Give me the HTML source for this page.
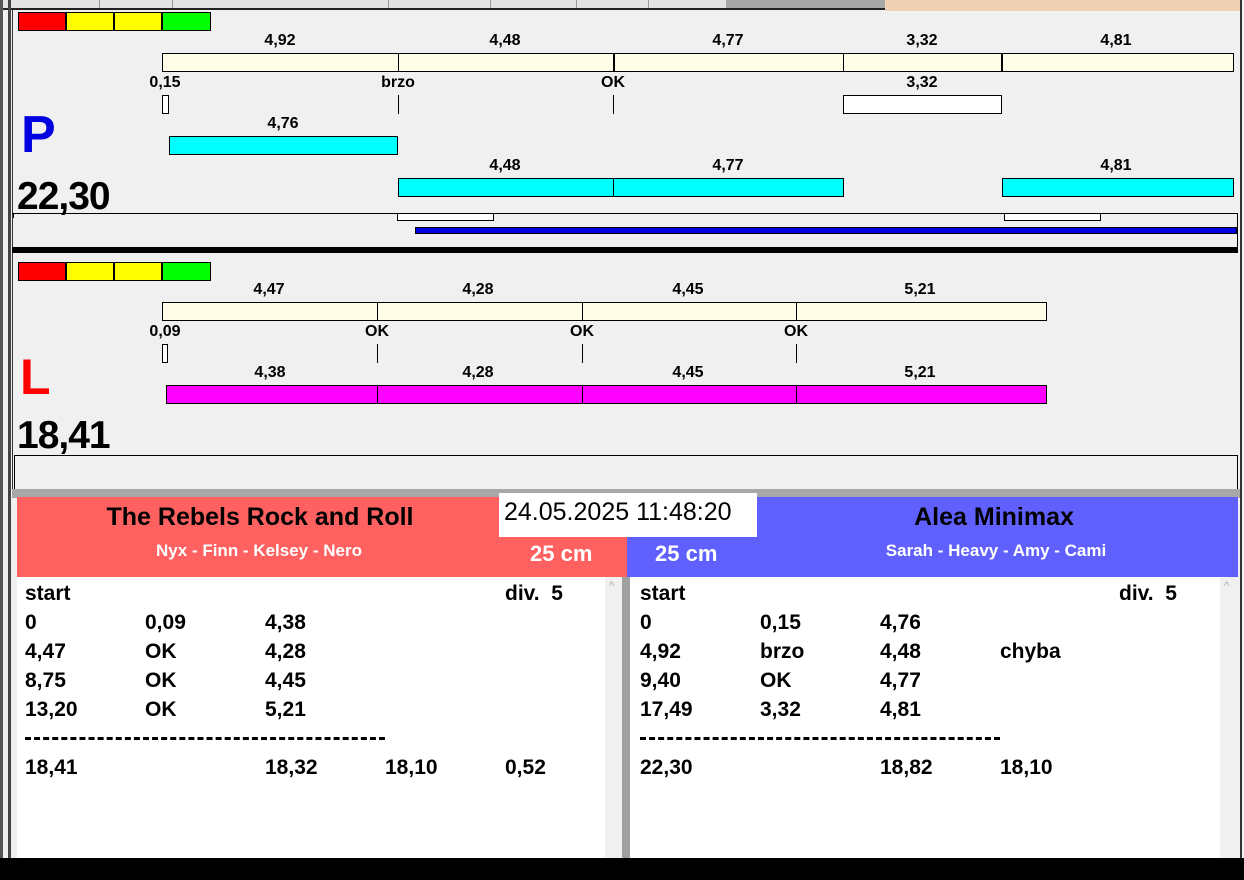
<!DOCTYPE html>
<html><head><meta charset="utf-8"><style>
*{margin:0;padding:0;box-sizing:border-box}
body{width:1244px;height:880px;background:#fff;position:relative;overflow:hidden;font-family:"Liberation Sans",Arial,sans-serif}
div{position:absolute}
.t{font-weight:bold;font-size:16px;color:#000;transform:translateX(-50%);white-space:nowrap;line-height:16px;margin-top:1px}
.bar{border:1px solid #000}
.v{width:1px;background:#000}
.r{font-weight:bold;font-size:21px;line-height:24px;white-space:nowrap;margin-top:1px}
</style></head><body>
<div style="left:0;top:0;width:1244px;height:880px;background:#f0f0f0"></div>
<!-- top tabs -->
<div style="left:0;top:0;width:885px;height:10px;background:#e4e4e4;border-bottom:2px solid #222"></div>
<div style="left:99px;top:0;width:1px;height:8px;background:#999"></div>
<div style="left:172px;top:0;width:1px;height:8px;background:#999"></div>
<div style="left:388px;top:0;width:1px;height:8px;background:#999"></div>
<div style="left:490px;top:0;width:1px;height:8px;background:#999"></div>
<div style="left:576px;top:0;width:1px;height:8px;background:#999"></div>
<div style="left:648px;top:0;width:1px;height:8px;background:#999"></div>
<div style="left:726px;top:0;width:159px;height:8px;background:#a8a8a8"></div>
<div style="left:885px;top:0;width:355px;height:11px;background:#f0d0b4"></div>
<!-- left border -->
<div style="left:0;top:0;width:3px;height:880px;background:#555"></div>
<div style="left:8px;top:0;width:3px;height:880px;background:#444"></div>
<div style="left:1240px;top:0;width:2px;height:880px;background:#333"></div>
<div style="left:12px;top:10px;width:1px;height:480px;background:#333"></div>

<!-- P panel -->
<div style="left:18px;top:12px;width:48px;height:19px;background:#f00;border:1px solid #000"></div>
<div style="left:66px;top:12px;width:48px;height:19px;background:#ff0;border:1px solid #000"></div>
<div style="left:114px;top:12px;width:48px;height:19px;background:#ff0;border:1px solid #000"></div>
<div style="left:162px;top:12px;width:49px;height:19px;background:#0f0;border:1px solid #000"></div>

<div class="t" style="left:280px;top:32px">4,92</div>
<div class="t" style="left:505px;top:32px">4,48</div>
<div class="t" style="left:728px;top:32px">4,77</div>
<div class="t" style="left:922px;top:32px">3,32</div>
<div class="t" style="left:1116px;top:32px">4,81</div>
<div class="bar" style="left:162px;top:53px;width:1072px;height:19px;background:#fffde8"></div>
<div class="v" style="left:398px;top:53px;height:19px"></div>
<div class="v" style="left:613px;top:53px;height:19px;width:2px"></div>
<div class="v" style="left:843px;top:53px;height:19px"></div>
<div class="v" style="left:1001px;top:53px;height:19px;width:2px"></div>
<div class="t" style="left:165px;top:74px">0,15</div>
<div class="t" style="left:398px;top:74px">brzo</div>
<div class="t" style="left:613px;top:74px">OK</div>
<div class="t" style="left:922px;top:74px">3,32</div>
<div class="bar" style="left:162px;top:95px;width:7px;height:19px;background:#fff"></div>
<div class="v" style="left:398px;top:95px;height:19px"></div>
<div class="v" style="left:613px;top:95px;height:19px"></div>
<div class="bar" style="left:843px;top:95px;width:159px;height:19px;background:#fff"></div>
<div style="left:21px;top:107px;font-size:52px;font-weight:bold;color:#0000e0;line-height:56px">P</div>
<div class="t" style="left:283px;top:115px">4,76</div>
<div class="bar" style="left:169px;top:136px;width:229px;height:19px;background:#0ff"></div>
<div class="t" style="left:505px;top:157px">4,48</div>
<div class="t" style="left:728px;top:157px">4,77</div>
<div class="t" style="left:1116px;top:157px">4,81</div>
<div class="bar" style="left:398px;top:178px;width:446px;height:19px;background:#0ff"></div>
<div class="v" style="left:613px;top:178px;height:19px"></div>
<div class="bar" style="left:1002px;top:178px;width:232px;height:19px;background:#0ff"></div>
<div style="left:17px;top:175px;font-size:39px;font-weight:bold;line-height:44px;letter-spacing:-1px">22,30</div>
<div style="left:12px;top:213px;width:1226px;height:1px;background:#000"></div>
<div class="v" style="left:13px;top:213px;height:5px"></div>
<div class="v" style="left:1237px;top:213px;height:36px"></div>
<div class="bar" style="left:397px;top:213px;width:97px;height:8px;background:#fff"></div>
<div class="bar" style="left:1004px;top:213px;width:97px;height:8px;background:#fff"></div>
<div style="left:415px;top:227px;width:822px;height:7px;background:#0000e0;border:1px solid #000"></div>
<div style="left:12px;top:247px;width:1226px;height:6px;background:#000"></div>

<!-- L panel -->
<div style="left:18px;top:262px;width:48px;height:19px;background:#f00;border:1px solid #000"></div>
<div style="left:66px;top:262px;width:48px;height:19px;background:#ff0;border:1px solid #000"></div>
<div style="left:114px;top:262px;width:48px;height:19px;background:#ff0;border:1px solid #000"></div>
<div style="left:162px;top:262px;width:49px;height:19px;background:#0f0;border:1px solid #000"></div>
<div class="t" style="left:269px;top:281px">4,47</div>
<div class="t" style="left:478px;top:281px">4,28</div>
<div class="t" style="left:688px;top:281px">4,45</div>
<div class="t" style="left:920px;top:281px">5,21</div>
<div class="bar" style="left:162px;top:302px;width:885px;height:19px;background:#fffde8"></div>
<div class="v" style="left:377px;top:302px;height:19px"></div>
<div class="v" style="left:582px;top:302px;height:19px"></div>
<div class="v" style="left:796px;top:302px;height:19px"></div>
<div class="t" style="left:165px;top:323px">0,09</div>
<div class="t" style="left:377px;top:323px">OK</div>
<div class="t" style="left:582px;top:323px">OK</div>
<div class="t" style="left:796px;top:323px">OK</div>
<div class="bar" style="left:162px;top:344px;width:6px;height:19px;background:#fff"></div>
<div class="v" style="left:377px;top:344px;height:19px"></div>
<div class="v" style="left:582px;top:344px;height:19px"></div>
<div class="v" style="left:796px;top:344px;height:19px"></div>
<div style="left:20px;top:350px;font-size:50px;font-weight:bold;color:#f00;line-height:54px">L</div>
<div class="t" style="left:270px;top:364px">4,38</div>
<div class="t" style="left:478px;top:364px">4,28</div>
<div class="t" style="left:688px;top:364px">4,45</div>
<div class="t" style="left:920px;top:364px">5,21</div>
<div class="bar" style="left:166px;top:385px;width:881px;height:19px;background:#f0f"></div>
<div class="v" style="left:377px;top:385px;height:19px"></div>
<div class="v" style="left:582px;top:385px;height:19px"></div>
<div class="v" style="left:796px;top:385px;height:19px"></div>
<div style="left:17px;top:414px;font-size:39px;font-weight:bold;line-height:44px;letter-spacing:-1px">18,41</div>
<div style="left:14px;top:455px;width:1224px;height:34px;border:1px solid #000;border-bottom:none"></div>
<div style="left:12px;top:489px;width:1228px;height:9px;background:#a8a8a8"></div>

<!-- bottom headers -->
<div style="left:17px;top:497px;width:610px;height:80px;background:#ff6060"></div>
<div style="left:627px;top:497px;width:611px;height:80px;background:#6060ff"></div>
<div style="left:499px;top:493px;width:258px;height:44px;background:#fff"></div>
<div style="left:504px;top:497px;font-size:25px;line-height:30px">24.05.2025 11:48:20</div>
<div class="t" style="left:260px;top:502px;font-size:25px;line-height:28px">The Rebels Rock and Roll</div>
<div class="t" style="left:259px;top:540px;font-size:17px;line-height:20px;color:#fff">Nyx - Finn - Kelsey - Nero</div>
<div style="left:530px;top:541px;font-size:22px;font-weight:bold;color:#fff;line-height:26px">25 cm</div>
<div style="left:655px;top:541px;font-size:22px;font-weight:bold;color:#fff;line-height:26px">25 cm</div>
<div class="t" style="left:994px;top:502px;font-size:25px;line-height:28px">Alea Minimax</div>
<div class="t" style="left:996px;top:540px;font-size:17px;line-height:20px;color:#fff">Sarah - Heavy - Amy - Cami</div>

<!-- lists -->
<div style="left:17px;top:577px;width:588px;height:281px;background:#fff"></div>
<div style="left:605px;top:577px;width:17px;height:281px;background:#f0f0f0"></div>
<div style="left:622px;top:577px;width:8px;height:281px;background:#a0a0a0"></div>
<div style="left:630px;top:577px;width:590px;height:281px;background:#fff"></div>
<div style="left:1220px;top:577px;width:18px;height:281px;background:#f0f0f0"></div>
<div style="left:609px;top:580px;font-size:11px;color:#aaa">^</div>
<div style="left:1224px;top:580px;font-size:11px;color:#aaa">^</div>
<div style="left:0;top:858px;width:1244px;height:22px;background:#000"></div>

<div class="r" style="left:25px;top:581px">start</div><div class="r" style="left:505px;top:581px">div.&nbsp; 5</div>
<div class="r" style="left:25px;top:610px">0</div><div class="r" style="left:145px;top:610px">0,09</div><div class="r" style="left:265px;top:610px">4,38</div>
<div class="r" style="left:25px;top:639px">4,47</div><div class="r" style="left:145px;top:639px">OK</div><div class="r" style="left:265px;top:639px">4,28</div>
<div class="r" style="left:25px;top:668px">8,75</div><div class="r" style="left:145px;top:668px">OK</div><div class="r" style="left:265px;top:668px">4,45</div>
<div class="r" style="left:25px;top:697px">13,20</div><div class="r" style="left:145px;top:697px">OK</div><div class="r" style="left:265px;top:697px">5,21</div>
<div style="left:25px;top:737px;width:360px;height:3px;border-top:3px dashed #000"></div>
<div class="r" style="left:25px;top:755px">18,41</div><div class="r" style="left:265px;top:755px">18,32</div><div class="r" style="left:385px;top:755px">18,10</div><div class="r" style="left:505px;top:755px">0,52</div>

<div class="r" style="left:640px;top:581px">start</div><div class="r" style="left:1119px;top:581px">div.&nbsp; 5</div>
<div class="r" style="left:640px;top:610px">0</div><div class="r" style="left:760px;top:610px">0,15</div><div class="r" style="left:880px;top:610px">4,76</div>
<div class="r" style="left:640px;top:639px">4,92</div><div class="r" style="left:760px;top:639px">brzo</div><div class="r" style="left:880px;top:639px">4,48</div><div class="r" style="left:1000px;top:639px">chyba</div>
<div class="r" style="left:640px;top:668px">9,40</div><div class="r" style="left:760px;top:668px">OK</div><div class="r" style="left:880px;top:668px">4,77</div>
<div class="r" style="left:640px;top:697px">17,49</div><div class="r" style="left:760px;top:697px">3,32</div><div class="r" style="left:880px;top:697px">4,81</div>
<div style="left:640px;top:737px;width:360px;height:3px;border-top:3px dashed #000"></div>
<div class="r" style="left:640px;top:755px">22,30</div><div class="r" style="left:880px;top:755px">18,82</div><div class="r" style="left:1000px;top:755px">18,10</div>
</body></html>
